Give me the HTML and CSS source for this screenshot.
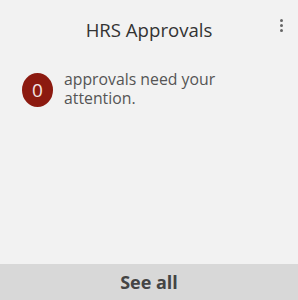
FILE: index.html
```html
<!DOCTYPE html>
<html>
<head>
<meta charset="utf-8">
<link rel="stylesheet" href="styles.css">
</head>
<body>
<div class="card">
  <header class="head">
    <h1 class="title">HRS Approvals</h1>
    <button class="kebab" aria-label="More">
      <span></span><span></span><span></span>
    </button>
  </header>
  <div class="body">
    <div class="count">0</div>
    <p class="msg">approvals need your attention.</p>
  </div>
  <footer class="foot">See all</footer>
</div>
</body>
</html>
```
FILE: styles.css
```css
html, body {
  margin: 0;
  padding: 0;
  height: 100%;
}
body {
  background: #f2f2f2;
  font-family: "Open Sans", "Liberation Sans", sans-serif;
  color: #3c3c3c;
}
.card {
  height: 300px;
  display: flex;
  flex-direction: column;
}
.head {
  position: relative;
  display: flex;
  justify-content: center;
  padding-top: 18px;
  height: 45px;
  box-sizing: border-box;
}
.title {
  margin: 0;
  font-size: 18.6px;
  font-weight: 400;
  line-height: 24px;
  color: #333;
}
.kebab {
  position: absolute;
  right: 14px;
  top: 19px;
  border: 0;
  background: none;
  padding: 0;
  width: 6px;
  display: flex;
  flex-direction: column;
  align-items: center;
  gap: 2px;
}
.kebab span {
  width: 3px;
  height: 3px;
  border-radius: 50%;
  background: #666;
}
.body {
  display: flex;
  align-items: flex-start;
  gap: 11px;
  padding: 25px 20px 0 22px;
  flex: 1;
}
.count {
  flex: none;
  width: 31px;
  height: 34px;
  border-radius: 50%;
  background: #8c1a10;
  color: #f4e6e4;
  font-size: 19px;
  line-height: 34px;
  text-align: center;
  margin-top: 3px;
}
.msg {
  margin: 0;
  font-size: 15.8px;
  line-height: 19px;
  color: #555;
  width: 165px;
}
.foot {
  height: 36px;
  background: #d8d8d8;
  display: flex;
  align-items: center;
  justify-content: center;
  font-size: 18px;
  font-weight: 700;
  color: #444;
}
```
